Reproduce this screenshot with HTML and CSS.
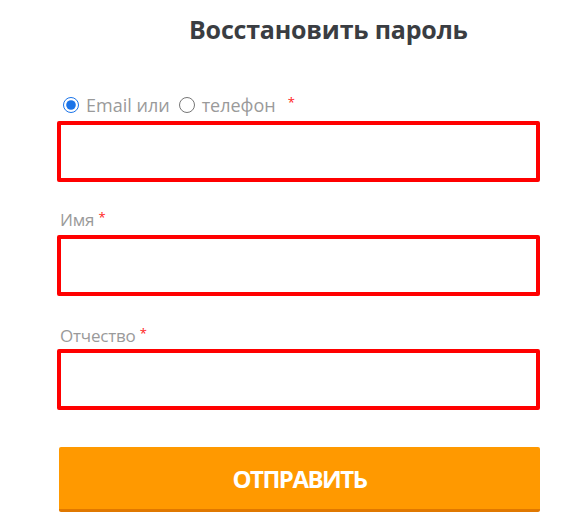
FILE: index.html
```html
<!DOCTYPE html>
<html lang="ru">
<head>
<meta charset="utf-8">
<link rel="stylesheet" href="styles.css">
</head>
<body>
<div class="page">
  <h1 class="title">Восстановить пароль</h1>
  <form class="form">
    <div class="field field-first">
      <div class="label radios">
        <label class="radio"><input type="radio" name="t" checked> Email или</label>
        <label class="radio"><input type="radio" name="t"> телефон</label>
        <span class="req req-gap">*</span>
      </div>
      <div class="input"></div>
    </div>
    <div class="field field-second">
      <div class="label">Имя <span class="req">*</span></div>
      <div class="input"></div>
    </div>
    <div class="field field-third">
      <div class="label">Отчество <span class="req">*</span></div>
      <div class="input input-tight"></div>
    </div>
    <button type="button" class="submit">ОТПРАВИТЬ</button>
  </form>
</div>
</body>
</html>
```

FILE: styles.css
```css
html, body {
  margin: 0;
  padding: 0;
  background: #fff;
}
body {
  font-family: "Open Sans", "Noto Sans", sans-serif;
}
.page {
  width: 588px;
  padding-top: 10px;
}
.title {
  margin: 0;
  padding-left: 189px;
  font-size: 25px;
  font-weight: 700;
  color: #3a3d42;
  line-height: 38px;
  letter-spacing: -0.2px;
}
.form {
  margin-left: 57px;
  width: 483px;
  padding-top: 46px;
}
.field {
  display: flex;
  flex-direction: column;
}
.label {
  font-size: 17px;
  color: #9a9a9a;
  line-height: 22px;
  padding-left: 3px;
  letter-spacing: -0.2px;
}
.radios {
  display: flex;
  align-items: center;
  padding-left: 6px;
  font-size: 18px;
  letter-spacing: 0;
}
.radio {
  display: flex;
  align-items: center;
  margin-right: 9px;
}
.radio input {
  margin: 0 7px 0 0;
  width: 16px;
  height: 16px;
  accent-color: #1a73e8;
}
.req {
  color: #ff1a1a;
  font-size: 13px;
  align-self: flex-start;
  line-height: 16px;
}
.req-gap {
  margin-left: 3px;
}
.label .req {
  vertical-align: top;
}
.input {
  height: 53px;
  border: 4px solid #ff0000;
  border-radius: 2px;
  margin-top: 5px;
}
.input-tight {
  margin-top: 2px;
}
.field-second {
  margin-top: 27px;
}
.field-second .input {
  margin-top: 4px;
}
.field-third {
  margin-top: 29px;
}
.submit {
  display: block;
  margin-top: 37px;
  margin-left: 2px;
  width: 481px;
  height: 65px;
  border: none;
  border-bottom: 3px solid #e07800;
  border-radius: 2px;
  background: #ff9900;
  color: #fff;
  font-family: "Open Sans", sans-serif;
  font-size: 24px;
  font-weight: 700;
  letter-spacing: -1.5px;
  padding: 0;
}
```
